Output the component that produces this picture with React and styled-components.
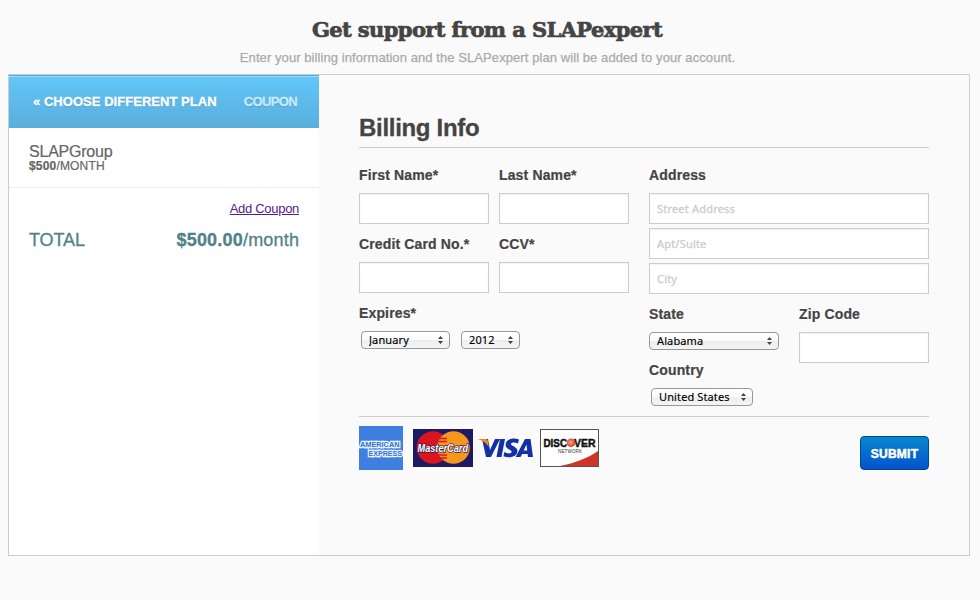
import React from "react";
import styled, { createGlobalStyle } from "styled-components";

const GlobalStyle = createGlobalStyle`
  * { box-sizing: border-box; }
  body {
    margin: 0;
    background: #fafafa;
    color: #444;
    font-family: "Liberation Sans", Arial, sans-serif;
  }
`;

const Page = styled.main`
  width: 980px;
  height: 600px;
  padding: 15px 10px 0 8px;
  overflow: hidden;
`;

const PageHeader = styled.header`
  height: 59px;
  display: flex;
  flex-direction: column;
  align-items: center;
`;

const PageTitle = styled.h1`
  margin: 0 0 0 -4px;
  font: bold 21px/30px "DejaVu Serif", serif;
  letter-spacing: -0.6px;
  white-space: nowrap;
  -webkit-text-stroke: 0.7px #444;
`;

const Subtitle = styled.p`
  margin: 4px 0 0 -3px;
  font-size: 13px;
  line-height: 17px;
  color: #aaa;
  white-space: nowrap;
  letter-spacing: 0.08px;
  -webkit-text-stroke: 0.25px #aaa;
`;

const Frame = styled.section`
  height: 482px;
  border: 1px solid #ccc;
  display: grid;
  grid-template-columns: 310px 1fr;
`;

const Summary = styled.aside`
  background: #fff;
`;

const Tabs = styled.nav`
  height: 53px;
  padding: 0 22px 2px 24px;
  border-top: 1px solid #4fa9d8;
  box-shadow: inset 0 1px 0 #a3dcfa;
  background: linear-gradient(#62c6fa, #5aaedb);
  display: flex;
  align-items: center;
  justify-content: space-between;
`;

const Tab = styled.a`
  color: ${(p) => (p.$dim ? "#c8eafc" : "#fff")};
  font-size: 13px;
  font-weight: bold;
  letter-spacing: ${(p) => (p.$dim ? "-0.65px" : "0.04px")};
  -webkit-text-stroke: 0.3px currentColor;
  text-shadow: 0 1px 1px rgba(0, 0, 0, 0.2);
  white-space: nowrap;
`;

const PlanItem = styled.div`
  height: 60px;
  padding: 15px 20px 0;
  border-bottom: 1px dotted #e2e2e2;
  color: #666;
`;

const PlanName = styled.div`
  font-size: 16px;
  line-height: 17px;
  letter-spacing: -0.22px;
  -webkit-text-stroke: 0.2px #666;
`;

const PlanPrice = styled.div`
  font-size: 12px;
  line-height: 13px;
  letter-spacing: 0.17px;
  -webkit-text-stroke: 0.2px #666;
`;

const CouponRow = styled.div`
  padding: 13px 20px 0;
  text-align: right;
  font-size: 13px;
  line-height: 16px;
  letter-spacing: -0.3px;
`;

const CouponLink = styled.a`
  color: #551a8b;
  text-decoration: underline;
`;

const TotalRow = styled.div`
  display: flex;
  justify-content: space-between;
  padding: 12px 20px 0;
  color: #508289;
  font-size: 18px;
  line-height: 22px;
  letter-spacing: -0.1px;
  -webkit-text-stroke: 0.3px #508289;
`;

const Amount = styled.span`
  letter-spacing: 0.2px;
  margin-right: -0.2px;
`;

const Form = styled.form`
  padding: 37px 40px 0;
`;

const SectionTitle = styled.h2`
  margin: 0;
  height: 36px;
  border-bottom: 1px solid #ccc;
  font-size: 24px;
  line-height: 31px;
  letter-spacing: -0.3px;
  -webkit-text-stroke: 0.3px #444;
`;

const Columns = styled.div`
  height: 269px;
  padding-top: 18px;
  border-bottom: 1px solid #ccc;
  display: grid;
  grid-template-columns: 270px 280px;
  gap: 20px;
`;

const Fields = styled.div`
  display: grid;
  grid-template-columns: 130px 130px;
  column-gap: ${(p) => p.$gap}px;
  row-gap: 11px;
  align-content: start;
`;

const Field = styled.div`
  grid-column: ${(p) => (p.$wide ? "1 / -1" : "auto")};
  grid-row: ${(p) => (p.$tall ? "span 2" : "auto")};
`;

const Label = styled.label`
  display: block;
  margin-bottom: 9px;
  font-size: 14px;
  font-weight: bold;
  line-height: 18px;
  letter-spacing: 0.14px;
  -webkit-text-stroke: 0.2px #444;
`;

const Stack = styled.div`
  display: grid;
  gap: 4px;
`;

const Input = styled.input`
  display: block;
  width: 100%;
  height: 31px;
  padding: 0 7px 1px;
  border: 1px solid #ccc;
  border-radius: 0;
  background: #fff;
  box-shadow: inset 0 1px 2px rgba(0, 0, 0, 0.06);
  font: 11px "Noto Sans", sans-serif;
  letter-spacing: 0.2px;
  outline: 0;
  &::placeholder {
    color: #ccc;
    opacity: 1;
    -webkit-text-stroke: 0.3px #ccc;
  }
`;

const SelectRow = styled.div`
  display: flex;
  gap: 11px;
  padding-left: ${(p) => p.$indent || 0}px;
`;

const SelectBox = styled.div`
  position: relative;
  width: ${(p) => p.$w}px;
  height: 18px;
`;

const NativeSelect = styled.select`
  appearance: none;
  display: block;
  width: 100%;
  height: 18px;
  margin: 0;
  padding: 0 0 0 7px;
  border: 1px solid #979797;
  border-radius: 4px;
  background: linear-gradient(#fff 0%, #fbfbfb 48%, #eee 52%, #f4f4f4 100%);
  color: #000;
  font: 11px/16px "Noto Sans", sans-serif;
  letter-spacing: 0.12px;
  -webkit-text-stroke: 0.15px #000;
`;

const Arrows = styled.svg`
  position: absolute;
  right: 7px;
  top: 5px;
  pointer-events: none;
`;

const FormFooter = styled.div`
  display: flex;
  justify-content: space-between;
  padding-top: 9px;
`;

const Cards = styled.div`
  display: flex;
  align-items: center;
  height: 44px;
`;

const CardLogo = styled.svg`
  display: block;
  margin-right: ${(p) => p.$after || 0}px;
`;

const Submit = styled.button`
  width: 69px;
  height: 34px;
  margin-top: 10px;
  padding: 1px 0 0;
  border: 1px solid #02478f;
  border-radius: 4px;
  background: linear-gradient(#0688cc, #0453cf);
  color: #fff;
  font: bold 12px "Liberation Sans", Arial, sans-serif;
  letter-spacing: 0.25px;
  -webkit-text-stroke: 0.5px #fff;
  text-shadow: 0 -1px 0 rgba(0, 0, 0, 0.2);
`;

function Select({ width, value }) {
  return (
    <SelectBox $w={width}>
      <NativeSelect aria-label={value} defaultValue={value}>
        <option>{value}</option>
      </NativeSelect>
      <Arrows width="5" height="8" viewBox="0 0 5 8">
        <path d="M0 3 2.5 0 5 3zM0 5 2.5 8 5 5z" fill="#444" />
      </Arrows>
    </SelectBox>
  );
}

function TextField({ label }) {
  return (
    <Field>
      <Label>{label}</Label>
      <Input aria-label={label} />
    </Field>
  );
}

function Amex() {
  return (
    <CardLogo $after={10} width="44" height="44" viewBox="0 0 44 44">
      <rect width="44" height="44" fill="#3f7fe0" />
      <g
        fill="#2f6fd8"
        stroke="#eaf2ff"
        strokeWidth="2.6"
        paintOrder="stroke"
        fontFamily="Liberation Sans, sans-serif"
        fontWeight="bold"
        fontSize="7.5"
      >
        <text x="1" y="21" textLength="39.5" lengthAdjust="spacingAndGlyphs">AMERICAN</text>
        <text x="9.5" y="30" textLength="33.5" lengthAdjust="spacingAndGlyphs">EXPRESS</text>
      </g>
    </CardLogo>
  );
}

function MasterCard() {
  return (
    <CardLogo $after={4} width="60" height="38" viewBox="0 0 60 38">
      <rect width="60" height="38" fill="#1c1c64" />
      <circle cx="20" cy="18.5" r="16.3" fill="#d9151f" />
      <circle cx="40.500" cy="18.5" r="16.3" fill="#f5971d" />
      <path d="M26 9.500h8M25 12.500h9M25 26h9M27 29h7" stroke="#d9151f" strokeWidth="1.4" />
      <text
        x="4.500"
        y="22.700"
        fontFamily="Liberation Sans, sans-serif"
        fontWeight="bold"
        fontStyle="italic"
        fontSize="11.500"
        fill="#fff"
        stroke="#3a1c50"
        strokeWidth="1.600"
        paintOrder="stroke"
        textLength="50.500"
        lengthAdjust="spacingAndGlyphs"
      >
        MasterCard
      </text>
    </CardLogo>
  );
}

function Visa() {
  return (
    <CardLogo $after={6} width="57" height="20" viewBox="0 0 57 20">
      <g fill="#1430a5">
        <path d="M5 1h6l2 11 5-11h5l-9 18H9z" />
        <path d="M23 1h5l-3.5 18h-5z" />
        <path d="M42 1.6 41 5.600c-3-1.500-7-1.400-7 .5 0 2 6.400 2.600 6.400 7 0 6-8 7.500-14 5.200l1-4.200c3 1.700 7.200 1.800 7.200-.3 0-2-6-2.500-6-7C28.600.8 36.500-.6 42 1.600z" />
        <path fillRule="evenodd" d="M48 1h5.500L56 19h-5l-.4-3h-5.500L43.600 19h-5zM49.500 6.500 46.600 12.500h3.600z" />
      </g>
      <path d="M0 1h8.500c1.500 0 2 .5 2.300 2l1 6C9 5 6 2.500 0 1z" fill="#f08a1d" />
    </CardLogo>
  );
}

function Discover() {
  return (
    <CardLogo width="59" height="38" viewBox="0 0 59 38">
      <defs>
        <radialGradient id="orb" cx="45%" cy="45%">
          <stop offset="0" stopColor="#f9a685" />
          <stop offset="1" stopColor="#df4429" />
        </radialGradient>
      </defs>
      <rect x=".5" y=".5" width="58" height="37" fill="#fefefe" stroke="#555" />
      <path d="M20 37C35 34 48 29 58 22v15z" fill="#cf3526" />
      <g
        fontFamily="Liberation Sans, sans-serif"
        fontWeight="bold"
        fontSize="11"
        fill="#111"
        stroke="#111"
        strokeWidth=".5"
      >
        <text x="3.500" y="17.500" textLength="23.500" lengthAdjust="spacingAndGlyphs">DISC</text>
        <text x="34" y="17.500" textLength="21.500" lengthAdjust="spacingAndGlyphs">VER</text>
      </g>
      <circle cx="31" cy="13.800" r="4.300" fill="url(#orb)" />
      <text x="18" y="23.500" fontFamily="Liberation Sans, sans-serif" fontSize="4.500" fill="#333" textLength="24">NETWORK</text>
    </CardLogo>
  );
}

export default function App() {
  return (
    <>
      <GlobalStyle />
      <Page>
        <PageHeader>
          <PageTitle>Get support from a SLAPexpert</PageTitle>
          <Subtitle>
            Enter your billing information and the SLAPexpert plan will be added to your account.
          </Subtitle>
        </PageHeader>
        <Frame>
          <Summary>
            <Tabs>
              <Tab>« CHOOSE DIFFERENT PLAN</Tab>
              <Tab $dim>COUPON</Tab>
            </Tabs>
            <PlanItem>
              <PlanName>SLAPGroup</PlanName>
              <PlanPrice><b>$500</b>/MONTH</PlanPrice>
            </PlanItem>
            <CouponRow>
              <CouponLink href="#">Add Coupon</CouponLink>
            </CouponRow>
            <TotalRow>
              <span>TOTAL</span>
              <Amount><b>$500.00</b>/month</Amount>
            </TotalRow>
          </Summary>
          <Form onSubmit={(e) => e.preventDefault()}>
            <SectionTitle>Billing Info</SectionTitle>
            <Columns>
              <Fields $gap={10}>
                <TextField label="First Name*" />
                <TextField label="Last Name*" />
                <TextField label="Credit Card No.*" />
                <TextField label="CCV*" />
                <Field $wide>
                  <Label>Expires*</Label>
                  <SelectRow $indent={2}>
                    <Select width={89} value="January" />
                    <Select width={59} value="2012" />
                  </SelectRow>
                </Field>
              </Fields>
              <Fields $gap={20}>
                <Field $wide>
                  <Label>Address</Label>
                  <Stack>
                    <Input placeholder="Street Address" />
                    <Input placeholder="Apt/Suite" />
                    <Input placeholder="City" />
                  </Stack>
                </Field>
                <Field>
                  <Label>State</Label>
                  <Select width={130} value="Alabama" />
                </Field>
                <Field $tall>
                  <Label>Zip Code</Label>
                  <Input aria-label="Zip Code" />
                </Field>
                <Field>
                  <Label>Country</Label>
                  <SelectRow $indent={2}>
                    <Select width={102} value="United States" />
                  </SelectRow>
                </Field>
              </Fields>
            </Columns>
            <FormFooter>
              <Cards>
                <Amex />
                <MasterCard />
                <Visa />
                <Discover />
              </Cards>
              <Submit type="submit">SUBMIT</Submit>
            </FormFooter>
          </Form>
        </Frame>
      </Page>
    </>
  );
}
